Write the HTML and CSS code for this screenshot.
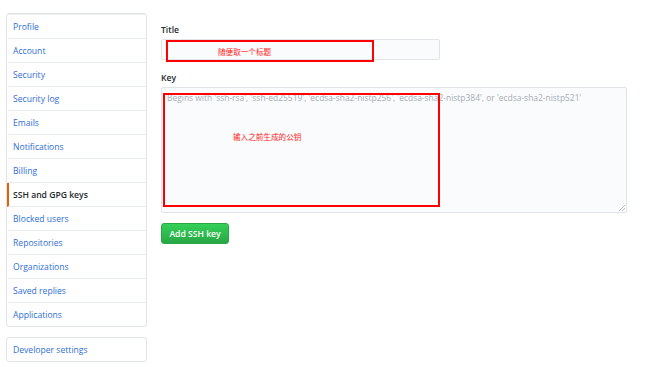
FILE: index.html
```html
<!DOCTYPE html>
<html>
<head>
<meta charset="utf-8">
<link rel="stylesheet" href="styles.css">
</head>
<body>
<div class="page">
  <aside class="side">
    <nav class="menu">
      <div class="menu-head"></div>
      <a class="item">Profile</a>
      <a class="item">Account</a>
      <a class="item">Security</a>
      <a class="item">Security log</a>
      <a class="item">Emails</a>
      <a class="item">Notifications</a>
      <a class="item">Billing</a>
      <a class="item selected">SSH and GPG keys</a>
      <a class="item">Blocked users</a>
      <a class="item">Repositories</a>
      <a class="item">Organizations</a>
      <a class="item">Saved replies</a>
      <a class="item last">Applications</a>
    </nav>
    <nav class="menu dev">
      <a class="item last">Developer settings</a>
    </nav>
  </aside>
  <main class="main">
    <div class="field">
      <label class="label">Title</label>
      <div class="input-wrap">
        <div class="input"></div>
        <div class="note note-title"><span>随便取一个标题</span></div>
      </div>
    </div>
    <div class="field">
      <label class="label">Key</label>
      <div class="input-wrap">
        <div class="textarea">
          <span class="placeholder">Begins with 'ssh-rsa', 'ssh-ed25519', 'ecdsa-sha2-nistp256', 'ecdsa-sha2-nistp384', or 'ecdsa-sha2-nistp521'</span>
          <svg class="grip" width="6" height="6" viewBox="0 0 6 6"><path d="M6 0 L0 6 M6 3 L3 6" stroke="#aaa" stroke-width="0.8"/></svg>
        </div>
        <div class="note note-key"><span>输入之前生成的公钥</span></div>
      </div>
    </div>
    <button class="btn">Add SSH key</button>
  </main>
</div>
</body>
</html>
```
FILE: styles.css
```css
* { box-sizing: border-box; }
html, body { margin: 0; padding: 0; background: #fff; }
body {
  font-family: "Open Sans", "Noto Sans CJK SC", sans-serif;
  font-size: 8.6px;
  color: #24292e;
}
.page {
  display: flex;
  padding: 13px 0 0 6px;
}
.side {
  width: 141px;
  flex: none;
}
.menu {
  border: 1px solid #e1e4e8;
  border-radius: 3px;
  display: flex;
  flex-direction: column;
  overflow: hidden;
}
.menu-head {
  height: 1px;
  background: #eceef2;
}
.item {
  height: 24px;
  line-height: 24px;
  padding-left: 4px;
  color: #2f6fd6;
  border-bottom: 1px solid #e9ecef;
  border-left: 2px solid transparent;
  white-space: nowrap;
}
.item.last { border-bottom: none; height: 23px; }
.item.selected {
  color: #24292e;
  font-weight: 600;
  border-left-color: #e36209;
}
.dev { margin-top: 10px; }
.main {
  margin-left: 14px;
  padding-top: 9px;
  width: 466px;
}
.label {
  display: block;
  font-weight: 600;
  height: 17px;
  line-height: 16px;
}
.field { margin-bottom: 10px; }
.input-wrap { position: relative; }
.input {
  width: 279px;
  height: 21px;
  background: #fafbfc;
  border: 1px solid #e1e4e8;
  border-radius: 2px;
}
.textarea {
  position: relative;
  width: 466px;
  height: 126px;
  background: #fafbfc;
  border: 1px solid #e1e4e8;
  border-radius: 2px;
  padding: 4px 5px;
}
.placeholder {
  color: #a8adb3;
  white-space: nowrap;
  font-size: 8.45px;
}
.grip {
  position: absolute;
  right: 1px;
  bottom: 1px;
}
.note {
  position: absolute;
  border: 2px solid #ff0000;
  color: #ff1a1a;
  font-size: 7.6px;
}
.note-title {
  left: 5px;
  top: 1px;
  width: 208px;
  height: 22px;
  padding: 4px 0 0 50px;
}
.note-key {
  left: 2px;
  top: 6px;
  width: 277px;
  height: 114px;
  padding: 36px 0 0 68px;
}
.btn {
  display: block;
  width: 68px;
  height: 21px;
  border: 1px solid #28a745;
  border-radius: 3px;
  background: linear-gradient(#34d058, #28a745);
  color: #fff;
  font-family: "Open Sans", sans-serif;
  font-weight: 600;
  font-size: 8.6px;
  padding: 0;
}
```
